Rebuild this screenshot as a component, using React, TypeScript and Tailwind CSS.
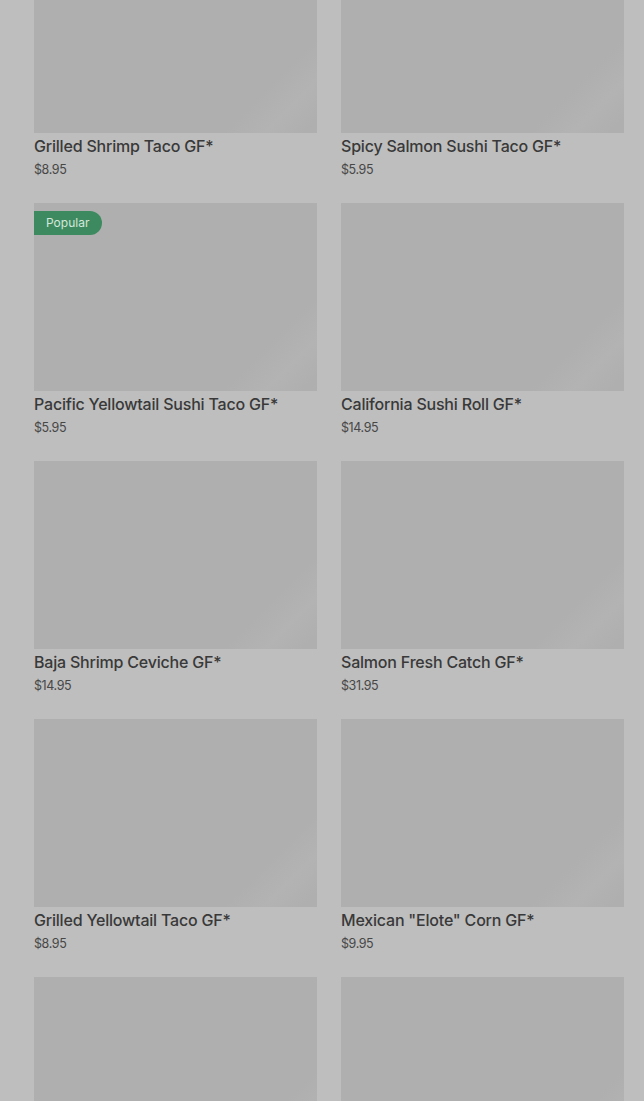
const items = [
  { name: "Grilled Shrimp Taco GF*", price: "$8.95" },
  { name: "Spicy Salmon Sushi Taco GF*", price: "$5.95" },
  { name: "Pacific Yellowtail Sushi Taco GF*", price: "$5.95", popular: true },
  { name: "California Sushi Roll GF*", price: "$14.95" },
  { name: "Baja Shrimp Ceviche GF*", price: "$14.95" },
  { name: "Salmon Fresh Catch GF*", price: "$31.95" },
  { name: "Grilled Yellowtail Taco GF*", price: "$8.95" },
  { name: "Mexican \"Elote\" Corn GF*", price: "$9.95" },
  { name: "", price: "" },
  { name: "", price: "" },
];

const MenuCard = ({ name, price, popular }: { name: string; price: string; popular?: boolean }) => (
  <div className="flex flex-col">
    <div className="relative h-[188px] bg-[#afafaf] bg-[linear-gradient(135deg,#afafaf_0%,#afafaf_80%,#b3b3b3_89%,#afafaf_97%)]">
      {popular && (
        <span className="absolute left-0 top-[8px] flex h-[24px] items-center rounded-r-full bg-[#3e8a60] pl-[12px] pr-[13px] text-[12px] text-[#d3e7da]">
          Popular
        </span>
      )}
    </div>
    <div className="h-[70px] pt-[3px]">
      <div className="text-[16px] font-medium leading-[20px] tracking-[-0.2px] text-[#393939]">{name}</div>
      <div className="mt-[5px] text-[12.5px] leading-[18px] tracking-[-0.4px] text-[#474747]">{price}</div>
    </div>
  </div>
);

export default function App() {
  return (
    <div className="h-[1101px] overflow-hidden bg-[#bebebe] font-['Inter',sans-serif]">
      <div className="-mt-[55px] grid grid-cols-2 gap-x-[24px] pl-[34px] pr-[20px]">
        {items.map((item, i) => (
          <MenuCard key={i} {...item} />
        ))}
      </div>
    </div>
  );
}
